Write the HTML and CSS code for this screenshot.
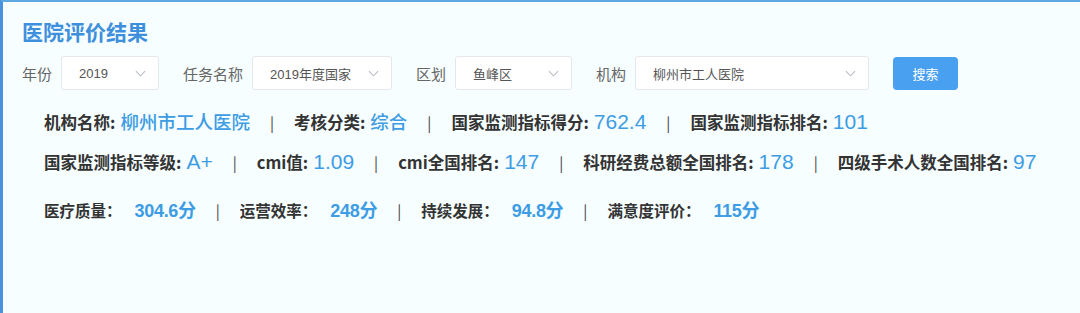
FILE: index.html
```html
<!DOCTYPE html>
<html lang="zh">
<head>
<meta charset="utf-8">
<link rel="stylesheet" href="styles.css">
</head>
<body>
<div class="panel">
  <h1 class="title">医院评价结果</h1>
  <div class="filters">
    <span class="flabel">年份</span>
    <div class="select w-year"><span>2019</span><svg class="chev" viewBox="0 0 12 7"><path d="M1 1 L6 6 L11 1" fill="none" stroke="#b8bcc4" stroke-width="1.2"/></svg></div>
    <span class="flabel">任务名称</span>
    <div class="select w-task"><span>2019年度国家</span><svg class="chev" viewBox="0 0 12 7"><path d="M1 1 L6 6 L11 1" fill="none" stroke="#b8bcc4" stroke-width="1.2"/></svg></div>
    <span class="flabel">区划</span>
    <div class="select w-area"><span>鱼峰区</span><svg class="chev" viewBox="0 0 12 7"><path d="M1 1 L6 6 L11 1" fill="none" stroke="#b8bcc4" stroke-width="1.2"/></svg></div>
    <span class="flabel">机构</span>
    <div class="select w-org"><span>柳州市工人医院</span><svg class="chev" viewBox="0 0 12 7"><path d="M1 1 L6 6 L11 1" fill="none" stroke="#b8bcc4" stroke-width="1.2"/></svg></div>
    <button class="btn">搜索</button>
  </div>

  <div class="info row1">
    <span class="k">机构名称:</span><span class="v cn">柳州市工人医院</span><span class="sep">|</span>
    <span class="k">考核分类:</span><span class="v cn">综合</span><span class="sep">|</span>
    <span class="k">国家监测指标得分:</span><span class="v">762.4</span><span class="sep">|</span>
    <span class="k">国家监测指标排名:</span><span class="v">101</span>
  </div>
  <div class="info row2">
    <span class="k">国家监测指标等级:</span><span class="v">A+</span><span class="sep">|</span>
    <span class="k">cmi值:</span><span class="v">1.09</span><span class="sep">|</span>
    <span class="k">cmi全国排名:</span><span class="v">147</span><span class="sep">|</span>
    <span class="k">科研经费总额全国排名:</span><span class="v">178</span><span class="sep">|</span>
    <span class="k">四级手术人数全国排名:</span><span class="v">97</span>
  </div>
  <div class="info row3">
    <span class="k">医疗质量：</span><span class="v">304.6分</span><span class="sep">|</span>
    <span class="k">运营效率：</span><span class="v">248分</span><span class="sep">|</span>
    <span class="k">持续发展：</span><span class="v">94.8分</span><span class="sep">|</span>
    <span class="k">满意度评价：</span><span class="v">115分</span>
  </div>
</div>
</body>
</html>
```

FILE: styles.css
```css
html, body {
  margin: 0;
  padding: 0;
  height: 100%;
}
body {
  background: #f6feff;
  font-family: "Noto Sans CJK SC", "Liberation Sans", sans-serif;
  overflow: hidden;
}
.panel {
  box-sizing: border-box;
  height: 313px;
  border-top: 2px solid #5fa9e3;
  border-left: 3px solid #4a92e0;
  padding: 15px 0 0 19px;
}
.title {
  margin: 0;
  font-size: 21px;
  line-height: 28px;
  font-weight: 700;
  color: #3e8fdc;
}
.filters {
  display: flex;
  align-items: center;
  margin-top: 11px;
  height: 34px;
}
.flabel {
  font-size: 15px;
  color: #666;
  margin-right: 9px;
}
.select {
  box-sizing: border-box;
  height: 34px;
  background: #fff;
  border: 1px solid #e4e7ec;
  border-radius: 3px;
  display: flex;
  align-items: center;
  justify-content: space-between;
  padding: 0 12px 0 17px;
  font-family: "Liberation Sans", "Noto Sans CJK SC", sans-serif;
  font-size: 13px;
  color: #555;
  margin-right: 24px;
}
.chev { width: 11px; height: 7px; }
.w-year { width: 98px; }
.w-task { width: 140px; padding-left: 17px; }
.w-area { width: 117px; }
.w-org { width: 234px; }
.btn {
  box-sizing: border-box;
  width: 65px;
  height: 33px;
  border: none;
  border-radius: 4px;
  background: #4aa0f0;
  color: #fff;
  font-family: "Noto Sans CJK SC", sans-serif;
  font-size: 13px;
}
.info {
  display: flex;
  align-items: baseline;
  padding-left: 22px;
  white-space: nowrap;
}
.row1 { margin-top: 18px; height: 30px; }
.row2 { margin-top: 12px; height: 30px; }
.row3 { margin-top: 16px; height: 30px; }
.k {
  font-size: 16.5px;
  font-weight: 700;
  color: #333;
}
.v {
  font-family: "Liberation Sans", "Noto Sans CJK SC", sans-serif;
  font-size: 21px;
  color: #3d9ce3;
  margin-left: 5px;
}
.v.cn {
  font-family: "Noto Sans CJK SC", sans-serif;
  font-size: 18.5px;
  font-weight: 500;
}
.sep {
  font-size: 15px;
  color: #444;
  margin: 0 20px;
}
.row3 .k { font-size: 15.5px; }
.row3 .v {
  font-size: 18px;
  font-weight: 700;
  margin-left: 13px;
  letter-spacing: -0.3px;
}
.row3 .sep { margin: 0 20px; }
```
